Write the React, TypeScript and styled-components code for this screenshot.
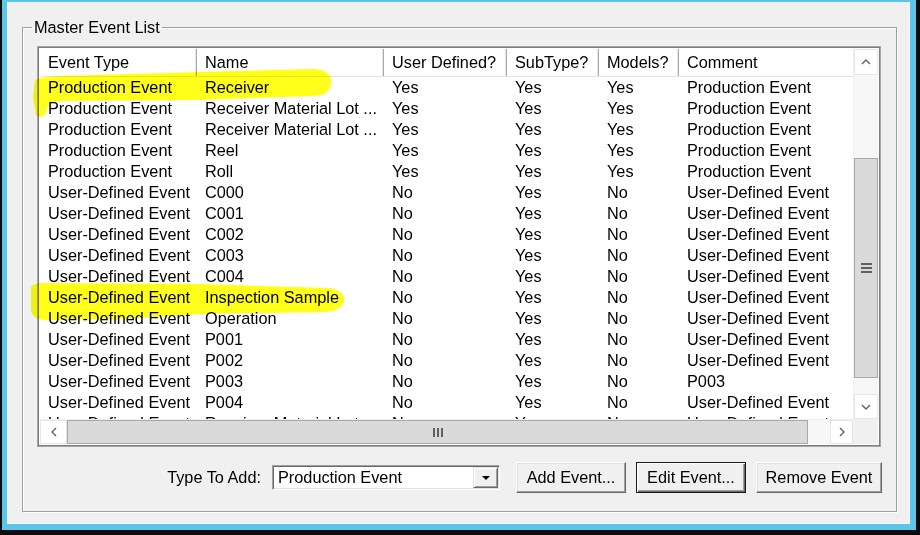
import React from "react";
import styled, { createGlobalStyle } from "styled-components";

const GlobalStyle = createGlobalStyle`
  html, body { margin: 0; padding: 0; background: #000; }
  body { font-family: "Liberation Sans", Arial, sans-serif; }
  * { box-sizing: border-box; }
`;

const Frame = styled.div`
  position: relative;
  width: 920px;
  height: 535px;
  background: #0b0b0b;
  padding: 0 4px 5px 2px;
  display: flex;
`;

const Bezel = styled.div`
  flex: 1;
  display: flex;
  background: #5cc6ea;
  padding: 2px 6px 6px 5px;
`;

const Window = styled.div`
  flex: 1;
  display: flex;
  flex-direction: column;
  background: #f0f0f0;
  border-right: 1px solid #fcfcfc;
  border-bottom: 1px solid #fcfcfc;
  padding: 16px 12px 10px 15px;
  font: 16.3px "Liberation Sans", Arial, sans-serif;
  color: #000;
`;

const GroupBox = styled.fieldset`
  margin: 0;
  min-width: 0;
  border: 1px solid #a0a0a0;
  box-shadow: inset 1px 1px 0 #fff, 1px 1px 0 #fff;
  padding: 10px 15px 18px 14px;
  display: flex;
  flex-direction: column;
  gap: 15px;
`;

const GroupTitle = styled.legend`
  padding: 0 2px;
  margin-left: -5px;
  line-height: 18px;
`;

const ListBox = styled.div`
  height: 401px;
  border: 1px solid #a7a7a7;
  padding: 2px;
  box-shadow: inset 0 0 0 1px #7c7c7c;
  background: #fff;
  display: grid;
  grid-template-columns: 1fr 25px;
  grid-template-rows: 1fr 25px;
  overflow: hidden;
`;

const columns = "157px 187px 123px 92px 80px 1fr";

const ListView = styled.div`
  overflow: hidden;
  display: flex;
  flex-direction: column;
  background: #fff;
`;

const HeaderRow = styled.div`
  display: grid;
  grid-template-columns: ${columns};
  height: 28px;
  flex-shrink: 0;
  border-bottom: 1px solid #e5e5e5;
`;

const HeaderCell = styled.div<{ $last?: boolean }>`
  display: flex;
  align-items: center;
  padding-left: 8px;
  white-space: nowrap;
  overflow: hidden;
  border-right: ${(p) => (p.$last ? "none" : "1px solid #a9a9a9")};
  box-shadow: ${(p) => (p.$last ? "none" : "inset -1px 0 0 #e6e6e6")};
`;

const Row = styled.div`
  display: grid;
  grid-template-columns: ${columns};
  height: 21px;
  flex-shrink: 0;
`;

const Cell = styled.div`
  display: flex;
  align-items: center;
  padding-left: 8px;
  white-space: nowrap;
  overflow: hidden;
`;

const VScroll = styled.div`
  display: flex;
  flex-direction: column;
  background: #f7f7f7;
  border-left: 1px solid #f0f0f0;
`;

const HScroll = styled.div`
  display: flex;
  background: #f7f7f7;
  border-top: 1px solid #f0f0f0;
`;

const ArrowBtn = styled.div<{ $size: number }>`
  flex: 0 0 ${(p) => p.$size}px;
  display: flex;
  align-items: center;
  justify-content: center;
  background: #fff;
  border: 1px solid #e6e6e6;
`;

const Track = styled.div<{ $horizontal?: boolean }>`
  flex: ${(p) => (p.$horizontal ? "0 0 22px" : "1")};
  display: flex;
  flex-direction: column;
  background: #f7f7f7;
`;

const Thumb = styled.div<{ $horizontal?: boolean }>`
  display: flex;
  align-items: center;
  justify-content: center;
  background: #dadada;
  border: 1px solid #a8a8a8;
  ${(p) =>
    p.$horizontal
      ? "flex: 1; flex-direction: row;"
      : "margin-top: 83px; height: 220px; flex-direction: column;"}
`;

const Grip = styled.div<{ $horizontal?: boolean }>`
  display: flex;
  flex-direction: ${(p) => (p.$horizontal ? "row" : "column")};
  gap: 2px;
`;

const GripLine = styled.span<{ $horizontal?: boolean }>`
  display: block;
  background: #606060;
  width: ${(p) => (p.$horizontal ? "2px" : "11px")};
  height: ${(p) => (p.$horizontal ? "9px" : "2px")};
`;

const Corner = styled.div`
  background: #f0f0f0;
`;

const Footer = styled.div`
  display: flex;
  align-items: center;
  justify-content: flex-end;
  gap: 10px;
  margin-right: -1px;
`;

const Label = styled.span`
  margin-right: 1px;
`;

const Combo = styled.div`
  width: 228px;
  height: 25px;
  margin-right: 6px;
  display: flex;
  align-items: center;
  justify-content: space-between;
  background: #fff;
  border: 1px solid;
  border-color: #a0a0a0 #fff #fff #a0a0a0;
  box-shadow: inset 1px 1px 0 #696969, inset -1px -1px 0 #e3e3e3;
  padding: 1px 1px 1px 5px;
`;

const DropBtn = styled.div`
  width: 25px;
  height: 21px;
  display: flex;
  align-items: center;
  justify-content: center;
  background: #f0f0f0;
  border: 1px solid;
  border-color: #e3e3e3 #696969 #696969 #e3e3e3;
  box-shadow: inset 1px 1px 0 #fff, inset -1px -1px 0 #a0a0a0;
`;

const Triangle = styled.span`
  width: 0;
  height: 0;
  border-left: 4px solid transparent;
  border-right: 4px solid transparent;
  border-top: 4px solid #000;
`;

const Button = styled.button<{ $width: number; $default?: boolean }>`
  width: ${(p) => p.$width}px;
  height: 31px;
  font: inherit;
  color: #000;
  background: #f0f0f0;
  padding: 0;
  white-space: nowrap;
  border: 1px solid;
  border-color: ${(p) =>
    p.$default ? "#1a1a1a" : "#fff #696969 #696969 #fff"};
  box-shadow: ${(p) =>
    p.$default
      ? "inset 1px 1px 0 #fff, inset -1px -1px 0 #696969, inset -2px -2px 0 #a0a0a0"
      : "inset -1px -1px 0 #a0a0a0, inset 1px 1px 0 #e3e3e3"};
`;

const Overlay = styled.svg`
  position: absolute;
  left: 0;
  top: 0;
  pointer-events: none;
  mix-blend-mode: multiply;
`;

type Ev = [string, string, string, string, string, string];

const P = "Production Event";
const U = "User-Defined Event";
const RML = "Receiver Material Lot ...";

const rows: Ev[] = [
  [P, "Receiver", "Yes", "Yes", "Yes", P],
  [P, RML, "Yes", "Yes", "Yes", P],
  [P, RML, "Yes", "Yes", "Yes", P],
  [P, "Reel", "Yes", "Yes", "Yes", P],
  [P, "Roll", "Yes", "Yes", "Yes", P],
  [U, "C000", "No", "Yes", "No", U],
  [U, "C001", "No", "Yes", "No", U],
  [U, "C002", "No", "Yes", "No", U],
  [U, "C003", "No", "Yes", "No", U],
  [U, "C004", "No", "Yes", "No", U],
  [U, "Inspection Sample", "No", "Yes", "No", U],
  [U, "Operation", "No", "Yes", "No", U],
  [U, "P001", "No", "Yes", "No", U],
  [U, "P002", "No", "Yes", "No", U],
  [U, "P003", "No", "Yes", "No", "P003"],
  [U, "P004", "No", "Yes", "No", U],
  [U, RML, "No", "Yes", "No", U],
];

const headers = ["Event Type", "Name", "User Defined?", "SubType?", "Models?", "Comment"];

const Chevron = ({ dir }: { dir: "up" | "down" | "left" | "right" }) => {
  const pts = {
    up: "1,6 5,2 9,6",
    down: "1,2 5,6 9,2",
    left: "6,1 2,5 6,9",
    right: "2,1 6,5 2,9",
  }[dir];
  const vertical = dir === "up" || dir === "down";
  return (
    <svg width={vertical ? 10 : 8} height={vertical ? 8 : 10} viewBox={vertical ? "0 0 10 8" : "0 0 8 10"}>
      <polyline points={pts} fill="none" stroke="#606060" strokeWidth="1.4" />
    </svg>
  );
};

export default function App() {
  return (
    <>
      <GlobalStyle />
      <Frame>
        <Bezel>
          <Window>
            <GroupBox>
              <GroupTitle>Master Event List</GroupTitle>
              <ListBox>
                <ListView>
                  <HeaderRow>
                    {headers.map((h, i) => (
                      <HeaderCell key={h} $last={i === headers.length - 1}>
                        {h}
                      </HeaderCell>
                    ))}
                  </HeaderRow>
                  {rows.map((r, i) => (
                    <Row key={i}>
                      {r.map((c, j) => (
                        <Cell key={j}>{c}</Cell>
                      ))}
                    </Row>
                  ))}
                </ListView>
                <VScroll>
                  <ArrowBtn $size={26}>
                    <Chevron dir="up" />
                  </ArrowBtn>
                  <Track>
                    <Thumb>
                      <Grip>
                        <GripLine />
                        <GripLine />
                        <GripLine />
                      </Grip>
                    </Thumb>
                  </Track>
                  <ArrowBtn $size={25}>
                    <Chevron dir="down" />
                  </ArrowBtn>
                </VScroll>
                <HScroll>
                  <ArrowBtn $size={27}>
                    <Chevron dir="left" />
                  </ArrowBtn>
                  <Thumb $horizontal>
                    <Grip $horizontal>
                      <GripLine $horizontal />
                      <GripLine $horizontal />
                      <GripLine $horizontal />
                    </Grip>
                  </Thumb>
                  <Track $horizontal />
                  <ArrowBtn $size={23}>
                    <Chevron dir="right" />
                  </ArrowBtn>
                </HScroll>
                <Corner />
              </ListBox>
              <Footer>
                <Label>Type To Add:</Label>
                <Combo>
                  <span>Production Event</span>
                  <DropBtn>
                    <Triangle />
                  </DropBtn>
                </Combo>
                <Button $width={110}>Add Event...</Button>
                <Button $width={110} $default>
                  Edit Event...
                </Button>
                <Button $width={126}>Remove Event</Button>
              </Footer>
            </GroupBox>
          </Window>
        </Bezel>
        <Overlay width={920} height={535} viewBox="0 0 920 535">
          <path
            d="M35 81 Q 36 77 60 76 L 200 72 L 312 69 Q 332 69 331 83 Q 330 96 312 96 L 200 100 L 62 101 Q 50 102 47 108 L 45 115 Q 40 119 36 115 L 33 98 Z"
            fill="#ffff1a"
          />
          <path
            d="M31 288 Q 31 283 45 283 L 200 284 L 327 288 Q 345 290 344 300 Q 343 311 325 312 L 200 314 Q 160 317 120 319 L 45 320 Q 32 319 31 310 Z"
            fill="#ffff1a"
          />
        </Overlay>
      </Frame>
    </>
  );
}
